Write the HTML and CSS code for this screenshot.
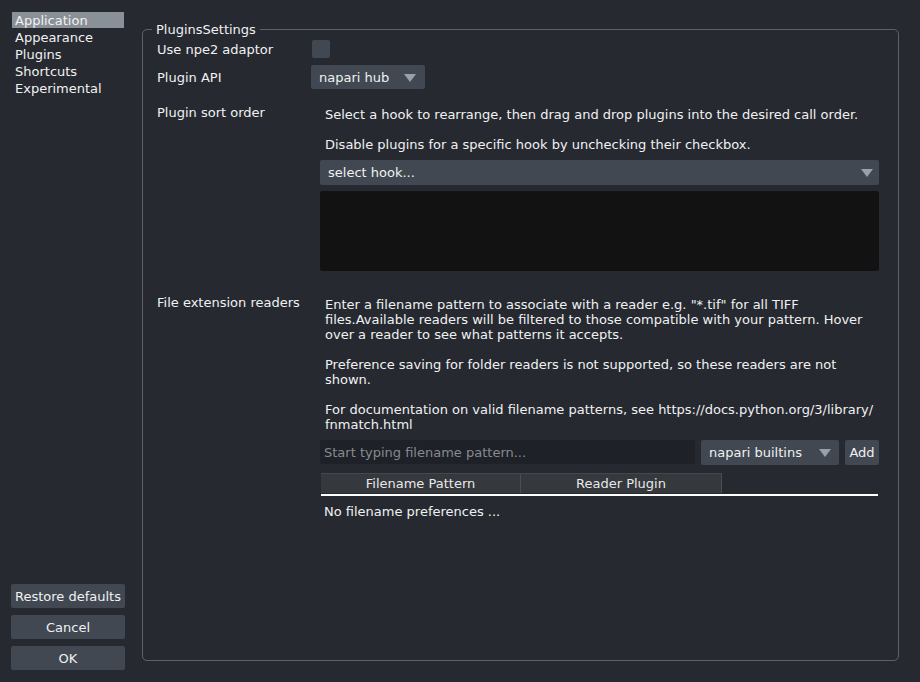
FILE: index.html
```html
<!DOCTYPE html>
<html>
<head>
<meta charset="utf-8">
<link rel="stylesheet" href="styles.css">
</head>
<body>
<div class="app">
  <aside class="sidebar">
    <ul class="nav">
      <li class="nav-item selected">Application</li>
      <li class="nav-item">Appearance</li>
      <li class="nav-item">Plugins</li>
      <li class="nav-item">Shortcuts</li>
      <li class="nav-item">Experimental</li>
    </ul>
    <div class="actions">
      <button class="btn">Restore defaults</button>
      <button class="btn">Cancel</button>
      <button class="btn">OK</button>
    </div>
  </aside>
  <main class="group">
    <span class="group-title">PluginsSettings</span>
    <div class="form">
      <div class="row row-npe2">
        <label class="label">Use npe2 adaptor</label>
        <span class="checkbox"></span>
      </div>
      <div class="row row-api">
        <label class="label">Plugin API</label>
        <div class="combo combo-api"><span>napari hub</span><span class="arrow"></span></div>
      </div>
      <div class="row row-sort">
        <label class="label label-sort">Plugin sort order</label>
        <div class="field">
          <p class="info">Select a hook to rearrange, then drag and drop plugins into the desired call order.</p>
          <p class="info info-2">Disable plugins for a specific hook by unchecking their checkbox.</p>
          <div class="combo combo-hook"><span>select hook...</span><span class="arrow"></span></div>
          <div class="hook-list"></div>
        </div>
      </div>
      <div class="row row-ext">
        <label class="label label-ext">File extension readers</label>
        <div class="field">
          <div class="desc">
            <p>Enter a filename pattern to associate with a reader e.g. "*.tif" for all TIFF<br>files.Available readers will be filtered to those compatible with your pattern. Hover<br>over a reader to see what patterns it accepts.</p>
            <p>Preference saving for folder readers is not supported, so these readers are not<br>shown.</p>
            <p>For documentation on valid filename patterns, see https://docs.python.org/3/library/<br>fnmatch.html</p>
          </div>
          <div class="entry">
            <input class="pattern" type="text" placeholder="Start typing filename pattern...">
            <div class="combo combo-reader"><span>napari builtins</span><span class="arrow"></span></div>
            <button class="btn btn-add">Add</button>
          </div>
          <div class="table">
            <div class="thead">
              <div class="th">Filename Pattern</div>
              <div class="th">Reader Plugin</div>
            </div>
            <div class="rule"></div>
            <div class="empty">No filename preferences ...</div>
          </div>
        </div>
      </div>
    </div>
  </main>
</div>
</body>
</html>
```
FILE: styles.css
```css
* { box-sizing: border-box; }
html, body {
  margin: 0;
  padding: 0;
  background: #262930;
  color: #f0f1f2;
  font-family: "DejaVu Sans", sans-serif;
  font-size: 13px;
}
.app {
  display: flex;
  width: 920px;
  height: 682px;
}
.sidebar {
  width: 142px;
  flex: none;
  display: flex;
  flex-direction: column;
  justify-content: space-between;
  padding: 12px 0 12px 0;
}
.nav {
  list-style: none;
  margin: 0 0 0 12px;
  padding: 0;
  width: 112px;
}
.nav-item {
  height: 17px;
  line-height: 18px;
  padding-left: 3px;
  white-space: nowrap;
}
.nav-item.selected {
  background: #8a9097;
  height: 16px;
  margin-bottom: 1px;
}
.actions {
  display: flex;
  flex-direction: column;
  gap: 7px;
  margin-left: 11px;
  width: 114px;
}
.btn {
  height: 24px;
  border: none;
  border-radius: 2px;
  background: #414851;
  color: #f0f1f2;
  font-family: "DejaVu Sans", sans-serif;
  font-size: 13px;
  padding: 0;
}
.group {
  position: relative;
  flex: 1;
  margin: 29px 21px 21px 0;
  border: 1px solid #5d6168;
  border-radius: 5px;
  padding: 10px 19px 0 14px;
}
.group-title {
  position: absolute;
  left: 9px;
  top: -9px;
  padding: 0 4px;
  background: #262930;
  line-height: 17px;
}
.form {
  display: flex;
  flex-direction: column;
}
.row {
  display: grid;
  grid-template-columns: 154px 1fr;
  align-items: start;
}
.label { white-space: nowrap; }
.row-npe2 { height: 18px; align-items: center; }
.row-npe2 .label { margin-top: 1px; }
.checkbox {
  display: block;
  width: 18px;
  height: 18px;
  margin-left: 1px;
  background: #414851;
  border-radius: 2px;
}
.row-api { margin-top: 7px; height: 24px; align-items: center; }
.combo {
  display: flex;
  align-items: center;
  justify-content: space-between;
  background: #414851;
  border-radius: 2px;
  height: 24px;
  padding: 0 8px;
  white-space: nowrap;
}
.arrow {
  width: 0;
  height: 0;
  border-left: 6px solid transparent;
  border-right: 6px solid transparent;
  border-top: 8px solid #9ba0a7;
  margin-top: 1px;
}
.combo-api { width: 114px; padding-right: 9px; }
.row-sort { margin-top: 13px; }
.label-sort { margin-top: 3px; }
.field {
  margin-left: 9px;
  display: flex;
  flex-direction: column;
}
.info {
  margin: 0;
  padding: 5px 5px 0 5px;
  line-height: 15px;
  white-space: nowrap;
}
.info-2 { margin-top: 10px; }
.combo-hook {
  margin-top: 8px;
  height: 25px;
  padding-right: 6px;
}
.hook-list {
  margin-top: 6px;
  height: 80px;
  background: #121212;
  border-radius: 2px;
}
.row-ext { margin-top: 24px; }
.desc {
  padding: 2px 5px 0 5px;
  line-height: 15px;
}
.desc p { margin: 0 0 15px 0; white-space: nowrap; }
.desc p:last-child { margin-bottom: 0; }
.entry {
  display: flex;
  gap: 6px;
  margin-top: 8px;
  height: 25px;
}
.pattern {
  width: 375px;
  height: 24px;
  border: none;
  border-radius: 2px;
  background: #1e2127;
  color: #f0f1f2;
  font-family: "DejaVu Sans", sans-serif;
  font-size: 13px;
  padding: 0 4px;
  outline: none;
}
.pattern::placeholder { color: #868a91; }
.combo-reader { width: 138px; height: 25px; }
.btn-add { width: 34px; height: 25px; }
.table {
  margin-top: 8px;
  margin-left: 1px;
  margin-right: 1px;
}
.thead {
  display: flex;
  height: 20px;
}
.th {
  width: 200px;
  background: #35383d;
  border-top: 1px solid #44474c;
  border-right: 1px solid #4a4d52;
  color: #e8e8e8;
  text-align: center;
  line-height: 19px;
}
.th + .th { width: 201px; }
.rule {
  height: 2px;
  margin-top: 1px;
  background: #ffffff;
}
.empty {
  padding: 8px 3px 7px;
  line-height: 16px;
}
```
